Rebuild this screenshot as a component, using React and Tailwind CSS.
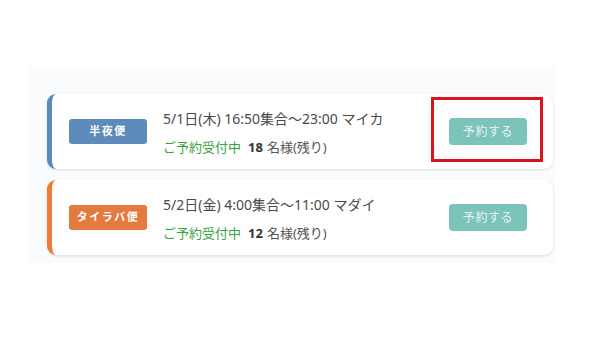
const TOURS = [
  {
    id: 1,
    label: '半夜便',
    accent: 'border-[#5b8bbd]',
    badge: 'bg-[#5e8cba]',
    title: '5/1日(木) 16:50集合～23:00 マイカ',
    remain: 18,
    highlight: true,
  },
  {
    id: 2,
    label: 'タイラバ便',
    accent: 'border-[#ee7d38]',
    badge: 'bg-[#e47a3d]',
    title: '5/2日(金) 4:00集合～11:00 マダイ',
    remain: 12,
  },
];

function TourCard({ tour }) {
  return (
    <div
      className={`relative flex items-center h-[75px] bg-white rounded-[9px] border-l-[5px] ${tour.accent} shadow-[0_1px_3px_rgba(0,0,0,0.12)] pl-[17px] pr-[26px]`}
    >
      {/* Badge */}
      <div
        className={`w-[78px] h-[25px] rounded-[3px] ${tour.badge} flex items-center justify-center text-white text-[11px] font-bold tracking-[0.14em]`}
      >
        {tour.label}
      </div>

      {/* Details */}
      <div className="ml-[16px] flex-1 flex flex-col gap-[10px] pt-[1px]">
        <p className="text-[14px] leading-[19px] text-[#4a4a4a]">{tour.title}</p>
        <p className="text-[13px] leading-[18px] text-[#555]">
          <span className="text-[#3aa03f]">ご予約受付中</span>
          <span className="ml-[7px] font-bold text-[#333]">{tour.remain}</span>
          <span className="ml-[4px]">名様(残り)</span>
        </p>
      </div>

      <button className="w-[78px] h-[27px] rounded-[4px] bg-[#7cc3bb] text-[#e6f4f1] text-[12px] tracking-[0.05em]">
        予約する
      </button>

      {/* Highlight frame */}
      {tour.highlight && (
        <div className="absolute left-[379px] top-[3px] w-[112px] h-[65px] border-[3px] border-[#d8141c] pointer-events-none" />
      )}
    </div>
  );
}

export default function App() {
  return (
    <div
      className="w-[613px] h-[341px] bg-white pt-[67px] pl-[29px]"
      style={{ fontFamily: '"Noto Sans", "Noto Sans CJK JP", sans-serif' }}
    >
      <div className="w-[526px] h-[195px] bg-[#fafbfd] pt-[27px] pl-[18px] pr-[2px] flex flex-col gap-[11px]">
        {TOURS.map((tour) => (
          <TourCard key={tour.id} tour={tour} />
        ))}
      </div>
    </div>
  );
}
